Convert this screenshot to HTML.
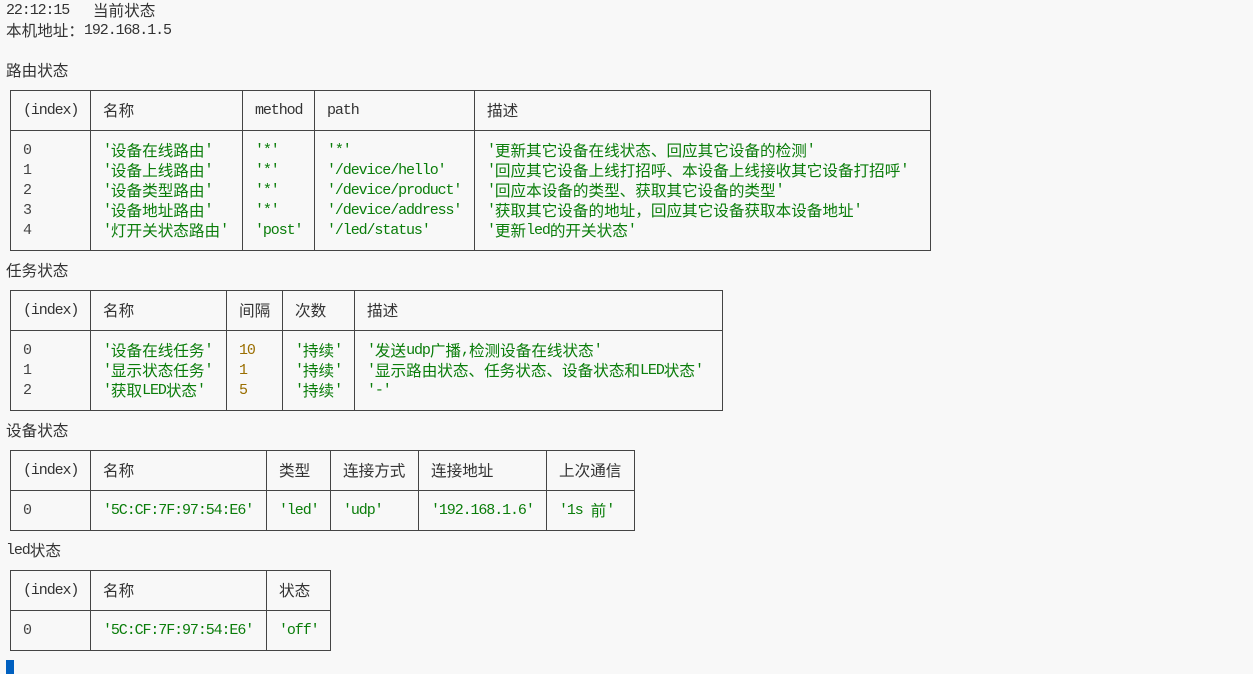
<!DOCTYPE html>
<html><head><meta charset="utf-8"><style>
body{margin:0;background:#f8f8f8;width:1253px;height:674px;overflow:hidden;position:relative;font-family:"Liberation Mono","Noto Sans CJK SC",monospace;font-size:15px;letter-spacing:-1.1px;color:#333;line-height:20px}
b{font-weight:normal;font-size:15.6px;letter-spacing:0;font-family:"Noto Sans CJK SC",sans-serif;line-height:0;position:relative;top:2px}
.t{position:absolute;white-space:pre}
table{position:absolute;border-collapse:collapse;table-layout:fixed}
td{border:1px solid #444;padding:0 0 0 12px;vertical-align:top;white-space:pre;overflow:hidden}
tr.h td{vertical-align:middle;padding-top:1px;height:38px}
tr.b td{padding-top:10px}
.g{color:#0a7d0a}.y{color:#9a6e00}.i{color:#444}
</style></head><body>
<div class="t" style="left:6px;top:1px">22:12:15   <b>当前状态</b></div>
<div class="t" style="left:6px;top:21px"><b>本机地址：</b>192.168.1.5</div>
<div class="t" style="left:6px;top:61px"><b>路由状态</b></div>
<table style="left:10px;top:90px;width:921px">
<colgroup><col style="width:80px"><col style="width:152px"><col style="width:72px"><col style="width:160px"><col style="width:456px"></colgroup>
<tr class="h"><td>(index)</td><td><b>名称</b></td><td>method</td><td>path</td><td><b>描述</b></td></tr>
<tr class="b"><td class="i" style="height:109px">0
1
2
3
4</td><td class="g">'<b>设备在线路由</b>'
'<b>设备上线路由</b>'
'<b>设备类型路由</b>'
'<b>设备地址路由</b>'
'<b>灯开关状态路由</b>'</td><td class="g">'*'
'*'
'*'
'*'
'post'</td><td class="g">'*'
'/device/hello'
'/device/product'
'/device/address'
'/led/status'</td><td class="g">'<b>更新其它设备在线状态、回应其它设备的检测</b>'
'<b>回应其它设备上线打招呼、本设备上线接收其它设备打招呼</b>'
'<b>回应本设备的类型、获取其它设备的类型</b>'
'<b>获取其它设备的地址，回应其它设备获取本设备地址</b>'
'<b>更新</b>led<b>的开关状态</b>'</td></tr></table>
<div class="t" style="left:6px;top:261px"><b>任务状态</b></div>
<table style="left:10px;top:290px;width:713px">
<colgroup><col style="width:80px"><col style="width:136px"><col style="width:56px"><col style="width:72px"><col style="width:368px"></colgroup>
<tr class="h"><td>(index)</td><td><b>名称</b></td><td><b>间隔</b></td><td><b>次数</b></td><td><b>描述</b></td></tr>
<tr class="b"><td class="i" style="height:69px">0
1
2</td><td class="g">'<b>设备在线任务</b>'
'<b>显示状态任务</b>'
'<b>获取</b>LED<b>状态</b>'</td><td class="y">10
1
5</td><td class="g">'<b>持续</b>'
'<b>持续</b>'
'<b>持续</b>'</td><td class="g">'<b>发送</b>udp<b>广播</b>,<b>检测设备在线状态</b>'
'<b>显示路由状态、任务状态、设备状态和</b>LED<b>状态</b>'
'-'</td></tr></table>
<div class="t" style="left:6px;top:421px"><b>设备状态</b></div>
<table style="left:10px;top:450px;width:625px">
<colgroup><col style="width:80px"><col style="width:176px"><col style="width:64px"><col style="width:88px"><col style="width:128px"><col style="width:88px"></colgroup>
<tr class="h"><td>(index)</td><td><b>名称</b></td><td><b>类型</b></td><td><b>连接方式</b></td><td><b>连接地址</b></td><td><b>上次通信</b></td></tr>
<tr class="h"><td class="i">0</td><td class="g">'5C:CF:7F:97:54:E6'</td><td class="g">'led'</td><td class="g">'udp'</td><td class="g">'192.168.1.6'</td><td class="g">'1s <b>前</b>'</td></tr></table>
<div class="t" style="left:6px;top:541px">led<b>状态</b></div>
<table style="left:10px;top:570px;width:321px">
<colgroup><col style="width:80px"><col style="width:176px"><col style="width:64px"></colgroup>
<tr class="h"><td>(index)</td><td><b>名称</b></td><td><b>状态</b></td></tr>
<tr class="h"><td class="i">0</td><td class="g">'5C:CF:7F:97:54:E6'</td><td class="g">'off'</td></tr></table>
<div style="position:absolute;left:6px;top:660px;width:8px;height:14px;background:#0060c0"></div>
</body></html>
